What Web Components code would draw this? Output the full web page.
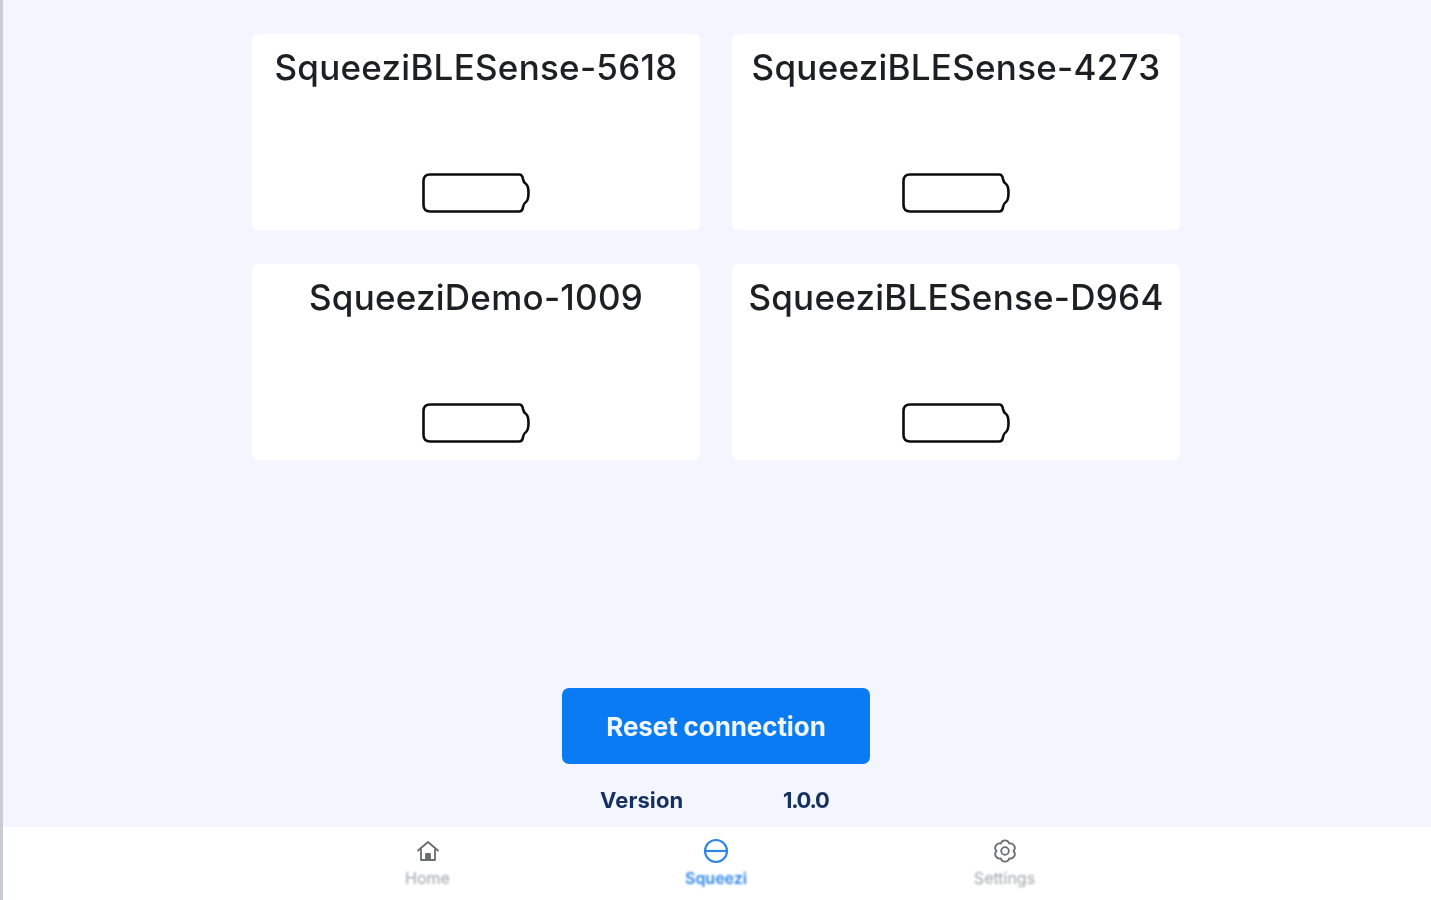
<!DOCTYPE html>
<html>
<head>
<meta charset="utf-8">
<title>Squeezi</title>
<style>
  html, body { margin: 0; height: 100%; }
  body { font-family: "Inter", "Liberation Sans", sans-serif; background: #f3f6fe; }
</style>
</head>
<body>

<template class="device-card-template">
  <style>
    :host {
      display: flex;
      flex-direction: column;
      align-items: center;
      justify-content: space-between;
      box-sizing: border-box;
      height: 196px;
      padding: 14px 0 17px;
      background: #fff;
      border-radius: 6px;
      color: #1e1f22;
    }
    .name {
      font-size: 35px;
      line-height: 38px;
      font-weight: 550;
      letter-spacing: 0.25px;
      white-space: nowrap;
      filter: blur(0.7px);
    }
    svg { display: block; filter: blur(0.5px); }
  </style>
  <div class="name"><slot></slot></div>
  <svg width="108" height="40" viewBox="0 0 108 40" fill="none" stroke="#0c0c0e" stroke-width="2.600">
    <path d="M8 1.500H97Q100.500 1.500 101 6Q101.500 9.500 104 11Q106.500 13 106.500 20Q106.500 27 104 29Q101.500 30.500 101 34Q100.500 38.500 97 38.500H8Q1.500 38.500 1.500 32V8Q1.500 1.500 8 1.500Z"/>
  </svg>
</template>

<template class="tab-item-template">
  <style>
    :host {
      display: flex;
      flex-direction: column;
      align-items: center;
      width: 288.5px;
      color: #a2a4a7;
    }
    :host([active]) { color: #2f86e4; }
    .icon { height: 28px; display: flex; align-items: center; color: #6a6c70; filter: blur(0.6px); }
    :host([active]) .icon { color: #2f86e4; }
    .label {
      font-size: 16px;
      line-height: 20px;
      margin-top: 3px;
      filter: blur(0.9px);
    }
    :host([active]) .label { font-weight: 600; filter: blur(0.8px); }
  </style>
  <div class="icon"><slot name="icon"></slot></div>
  <div class="label"><slot></slot></div>
</template>

<template class="tab-bar-template">
  <style>
    :host {
      display: flex;
      justify-content: center;
      box-sizing: border-box;
      height: 73px;
      padding: 10px 2px 0 0;
      background: #fff;
    }
  </style>
  <slot></slot>
</template>

<template class="reset-panel-template">
  <style>
    :host {
      display: flex;
      flex-direction: column;
      align-items: center;
      padding-right: 2px;
    }
    button {
      width: 308px;
      height: 76px;
      border: 0;
      border-radius: 7px;
      background: #0a7bf2;
      color: #eef5ff;
      font: 700 26px "Inter", "Liberation Sans", sans-serif;
      letter-spacing: -0.1px;
    }
    button span { display: block; filter: blur(0.7px); }
    .version {
      display: grid;
      grid-template-columns: 183px auto;
      width: 232px;
      margin-top: 23px;
      color: #16305f;
      font-size: 22px;
      line-height: 26px;
      font-weight: 700;
      filter: blur(0.6px);
    }
    .version span:first-child { letter-spacing: 0.1px; }
    .version span:last-child { letter-spacing: -1.3px; }
  </style>
  <button><span><slot></slot></span></button>
  <div class="version"><span>Version</span><span>1.0.0</span></div>
</template>

<template class="squeezi-app-template">
  <style>
    :host {
      display: flex;
      flex-direction: column;
      box-sizing: border-box;
      height: 100vh;
      overflow: hidden;
      border-left: 3px solid #c8ccd4;
      background: #f3f6fe;
    }
    main {
      flex: 1;
      display: flex;
      flex-direction: column;
      justify-content: space-between;
      padding: 34px 0 14px;
      min-height: 0;
    }
    .grid {
      display: grid;
      grid-template-columns: 448px 448px;
      gap: 34px 32px;
      justify-content: center;
      padding-right: 2px;
    }
  </style>
  <main>
    <div class="grid"><slot name="devices"></slot></div>
    <slot name="panel"></slot>
  </main>
  <slot name="tabs"></slot>
</template>

<squeezi-app>
  <device-card slot="devices">SqueeziBLESense-5618</device-card>
  <device-card slot="devices">SqueeziBLESense-4273</device-card>
  <device-card slot="devices">SqueeziDemo-1009</device-card>
  <device-card slot="devices">SqueeziBLESense-D964</device-card>
  <reset-panel slot="panel">Reset connection</reset-panel>
  <tab-bar slot="tabs">
    <tab-item>
      <svg slot="icon" width="24" height="24" viewBox="0 0 24 24" fill="none" stroke="currentColor" stroke-width="1.800" stroke-linejoin="round">
        <path d="M1.500 12 12 3l10.500 9"/>
        <path d="M5 10v11h14V10"/>
        <path d="M10 21v-6h4v6" fill="currentColor"/>
      </svg>
      Home
    </tab-item>
    <tab-item active>
      <svg slot="icon" width="26" height="26" viewBox="0 0 26 26" fill="none" stroke="currentColor" stroke-width="2.200">
        <circle cx="13" cy="13" r="11"/>
        <path d="M2 13h22"/>
      </svg>
      Squeezi
    </tab-item>
    <tab-item>
      <svg slot="icon" width="24" height="24" viewBox="0 0 24 24" fill="none" stroke="currentColor" stroke-width="1.800" stroke-linejoin="round">
        <path d="M7.750 4.640A4.400 4.400 0 0 1 16.250 4.640A4.400 4.400 0 0 1 20.500 12A4.400 4.400 0 0 1 16.250 19.360A4.400 4.400 0 0 1 7.750 19.360A4.400 4.400 0 0 1 3.500 12A4.400 4.400 0 0 1 7.750 4.640Z"/>
        <circle cx="12" cy="12" r="3.800"/>
      </svg>
      Settings
    </tab-item>
  </tab-bar>
</squeezi-app>

<script>
function defineFromTemplate(tag, templateClass) {
  const template = document.querySelector("." + templateClass).content
  customElements.define(tag, class extends HTMLElement {
    constructor() {
      super()
      this.attachShadow({ mode: "open" }).appendChild(template.cloneNode(true))
    }
  })
}

defineFromTemplate("device-card", "device-card-template")
defineFromTemplate("tab-item", "tab-item-template")
defineFromTemplate("tab-bar", "tab-bar-template")
defineFromTemplate("reset-panel", "reset-panel-template")
defineFromTemplate("squeezi-app", "squeezi-app-template")
</script>
</body>
</html>
